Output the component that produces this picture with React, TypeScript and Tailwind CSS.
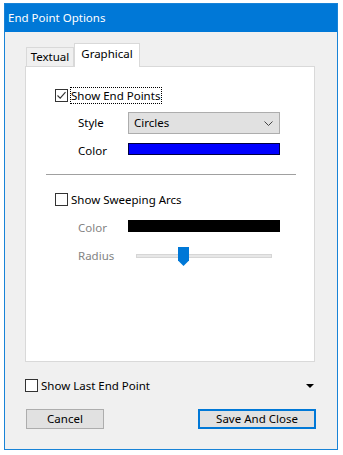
import React from 'react';

const font = { fontFamily: '"Noto Sans", "Segoe UI", sans-serif' };

function CheckBox({ checked }: { checked?: boolean }) {
  return (
    <span className="flex h-[13px] w-[13px] shrink-0 items-center justify-center border border-[#333333] bg-white">
      {checked && (
        <svg width="11" height="11" viewBox="0 0 11 11">
          <path d="M1.5 5.5 L4.2 8.2 L9.5 2.2" fill="none" stroke="#333333" strokeWidth="1.1" />
        </svg>
      )}
    </span>
  );
}

export default function App() {
  return (
    <div className="h-[455px] w-[343px] bg-white pl-[4px] pt-[3px] text-[11.5px] leading-none text-black" style={font}>
      <div className="flex h-[447px] w-[334px] flex-col border border-[#1883d7] bg-[#f0f0f0]">
        {/* Title bar */}
        <div className="flex h-[28px] shrink-0 items-center bg-[#0078d7] pl-[3px] text-[11.5px] text-white">
          End Point Options
        </div>

        <div className="flex flex-col pl-[20px] pr-[22px]">
          {/* Tabs */}
          <div className="mt-[11px] flex items-end pl-[1px]">
            <div className="flex h-[19px] w-[48px] items-center justify-center border border-b-0 border-[#d9d9d9] bg-[#f0f0f0]">
              Textual
            </div>
            <div className="relative z-10 -mb-px flex h-[24px] w-[66px] items-start justify-center border border-b-0 border-[#d9d9d9] bg-white pt-[4px]">
              Graphical
            </div>
          </div>

          {/* Panel */}
          <div className="flex h-[296px] w-[290px] flex-col border border-[#d9d9d9] bg-white">
            <div className="mt-[20px] flex h-[17px] items-center pl-[29px]">
              <CheckBox checked />
              <span className="ml-[2px] flex h-[17px] items-center border border-dotted border-black pr-[1px]">
                Show End Points
              </span>
            </div>

            <div className="mt-[8px] flex h-[22px] items-center pl-[52px]">
              <span className="w-[50px]">Style</span>
              <div className="flex h-[22px] w-[152px] items-center justify-between border border-[#adadad] bg-[#e1e1e1] pl-[5px] pr-[6px]">
                <span>Circles</span>
                <svg width="9" height="5" viewBox="0 0 9 5">
                  <path d="M0.5 0.5 L4.5 4.5 L8.5 0.5" fill="none" stroke="#444444" strokeWidth="1" />
                </svg>
              </div>
            </div>

            <div className="mt-[9px] flex h-[12px] items-center pl-[52px]">
              <span className="mt-[3px] w-[50px]">Color</span>
              <div className="h-[12px] w-[152px] border border-[#000040] bg-[#0000ff]" />
            </div>

            <div className="ml-[20px] mt-[19px] h-px w-[250px] bg-[#a0a0a0]" />

            <div className="mt-[16px] flex h-[17px] items-center pl-[29px]">
              <CheckBox />
              <span className="ml-[3px]">Show Sweeping Arcs</span>
            </div>

            <div className="mt-[12px] flex h-[12px] items-center pl-[52px] text-[#838383]">
              <span className="mt-[3px] w-[50px]">Color</span>
              <div className="h-[12px] w-[152px] bg-black" />
            </div>

            <div className="mt-[14px] flex h-[20px] items-center pl-[52px] text-[#838383]">
              <span className="w-[58px]">Radius</span>
              <div className="relative h-[20px] w-[136px]">
                <div className="absolute left-0 top-[8px] h-[4px] w-[136px] border border-[#d6d6d6] bg-[#e7e7e7]" />
                <svg className="absolute left-[42px] top-[1px]" width="11" height="19" viewBox="0 0 11 19">
                  <path d="M0 0 H11 V13.5 L5.5 19 L0 13.5 Z" fill="#0078d7" />
                </svg>
              </div>
            </div>
          </div>

          {/* Show last end point */}
          <div className="mt-[17px] flex h-[13px] items-center justify-between">
            <div className="flex items-center">
              <CheckBox />
              <span className="ml-[3px]">Show Last End Point</span>
            </div>
            <svg className="mr-[1px]" width="8" height="4" viewBox="0 0 8 4">
              <path d="M0 0 H8 L4 4 Z" fill="#000000" />
            </svg>
          </div>

          {/* Buttons */}
          <div className="mt-[17px] flex items-center justify-between pl-[1px]">
            <button className="flex h-[20px] w-[78px] items-center justify-center border border-[#adadad] bg-[#e1e1e1]">
              Cancel
            </button>
            <button className="-mr-[1px] flex h-[20px] w-[118px] items-center justify-center border-2 border-[#0078d7] bg-[#e1e1e1]">
              Save And Close
            </button>
          </div>
        </div>
      </div>
    </div>
  );
}
